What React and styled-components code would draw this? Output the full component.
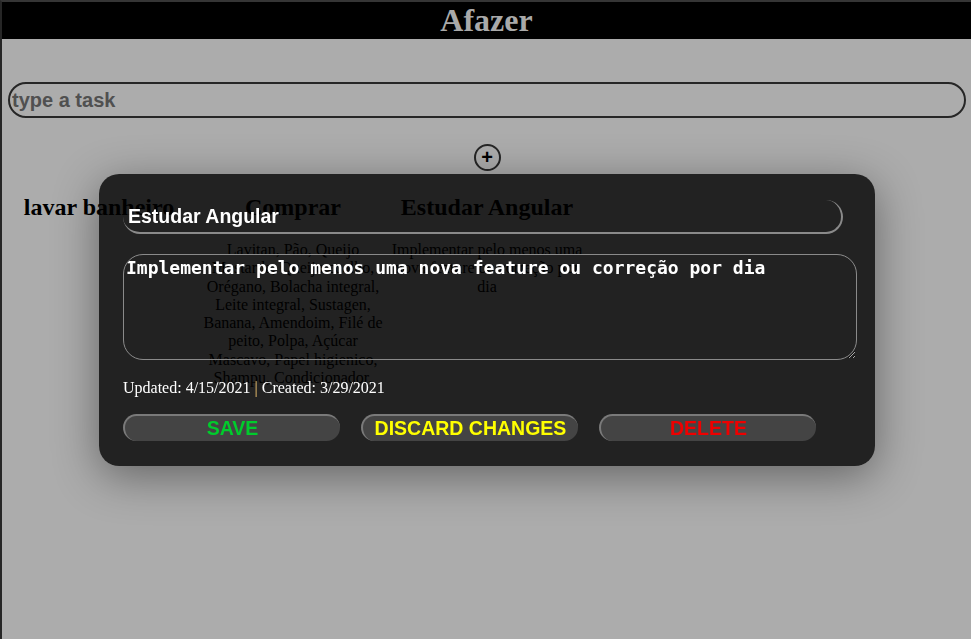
import React, { useState } from 'react'
import styled, { createGlobalStyle } from 'styled-components'

const GlobalStyle = createGlobalStyle`
  html, body {
    margin: 0;
    padding: 0;
    background: #acacac;
  }
  * {
    box-sizing: border-box;
  }
`

const tasks = [
  { id: 1, title: 'lavar banheiro', description: '' },
  {
    id: 2,
    title: 'Comprar',
    description:
      'Lavitan, Pão, Queijo Mostarda, Queijo coalho, Orégano, Bolacha integral, Leite integral, Sustagen, Banana, Amendoim, Filé de peito, Polpa, Açúcar Mascavo, Papel higienico, Shampu, Condicionador,'
  },
  {
    id: 3,
    title: 'Estudar Angular',
    description: 'Implementar pelo menos uma nova feature ou correção por dia'
  }
]

const App = () => {
  const [selected] = useState(tasks[2])
  const [title, setTitle] = useState(selected.title)
  const [text, setText] = useState(selected.description)

  return (
    <>
      <GlobalStyle />
      <Page>
        <Header>
          <h1>Afazer</h1>
        </Header>

        <NewTask>
          <input type="text" placeholder="type a task" />
          <AddButton>+</AddButton>
        </NewTask>

        <CardList>
          {tasks.map((task) => (
            <Card key={task.id}>
              <h2>{task.title}</h2>
              {task.description && <p>{task.description}</p>}
            </Card>
          ))}
        </CardList>

        <Modal>
          <TitleInput value={title} onChange={(e) => setTitle(e.target.value)} />
          <TextArea
            value={text}
            spellCheck={false}
            onChange={(e) => setText(e.target.value)}
          />
          <Dates>
            Updated: 4/15/2021 <span>|</span> Created: 3/29/2021
          </Dates>
          <Actions>
            <ActionButton color="#00cc2c">SAVE</ActionButton>
            <ActionButton color="#ffff00">DISCARD CHANGES</ActionButton>
            <ActionButton color="#ee0000">DELETE</ActionButton>
          </Actions>
        </Modal>
      </Page>
    </>
  )
}

const Page = styled.div`
  min-height: 100vh;
  border-top: 2px solid #353535;
  border-left: 2px solid #262626;
  background: #acacac;
  font-family: "Liberation Serif", "Times New Roman", serif;
`

const Header = styled.header`
  background: #000;
  text-align: center;

  h1 {
    margin: 0;
    font-size: 32px;
    font-weight: bold;
    color: #a9a9a9;
    line-height: 37px;
  }
`

const NewTask = styled.div`
  display: flex;
  flex-direction: column;
  align-items: center;
  padding: 43px 5px 0 6px;

  input {
    width: 100%;
    height: 36px;
    border: 2px solid #262626;
    border-radius: 18px;
    background: transparent;
    padding: 0 2px;
    font-family: "Liberation Sans", Arial, sans-serif;
    font-weight: bold;
    font-size: 20px;
    color: #222;
    outline: none;

    &::placeholder {
      color: #505050;
    }
  }
`

const AddButton = styled.button`
  margin-top: 26px;
  width: 27px;
  height: 27px;
  border-radius: 50%;
  border: 2px solid #262626;
  background: transparent;
  padding: 0 0 1px;
  font-family: "Liberation Sans", Arial, sans-serif;
  font-size: 20px;
  font-weight: bold;
  line-height: 20px;
  color: #000;
  display: flex;
  align-items: center;
  justify-content: center;
`

const CardList = styled.div`
  display: flex;
  align-items: flex-start;
`

const Card = styled.div`
  width: 194px;
  text-align: center;
  color: #000;

  h2 {
    font-size: 24px;
    margin: 23px 0 20px;
  }

  p {
    margin: 0;
    font-size: 16px;
    line-height: 18.3px;
  }
`

const Modal = styled.div`
  position: fixed;
  top: 174px;
  left: 99px;
  width: 776px;
  height: 292px;
  border-radius: 20px;
  background: rgba(0, 0, 0, 0.8);
  box-shadow: 0 10px 45px rgba(0, 0, 0, 0.42);
  padding: 26px 18px 0 24px;
  display: flex;
  flex-direction: column;
`

const TitleInput = styled.input`
  width: 720px;
  height: 34px;
  background: transparent;
  border: none;
  border-bottom: 2px solid #8a8a8a;
  border-right: 2px solid #8a8a8a;
  border-radius: 20px;
  padding: 0 5px;
  font-family: "Liberation Sans", Arial, sans-serif;
  font-weight: bold;
  font-size: 19.5px;
  color: #fff;
  outline: none;
`

const TextArea = styled.textarea`
  margin-top: 20px;
  width: 734px;
  height: 106px;
  background: transparent;
  border: 1px solid #8a8a8a;
  border-radius: 20px;
  padding: 2px;
  font-family: "DejaVu Sans Mono", monospace;
  font-weight: bold;
  font-size: 18px;
  line-height: 22px;
  color: #fff;
  outline: none;
`

const Dates = styled.div`
  margin-top: 19px;
  font-size: 16px;
  line-height: 18px;
  color: #fff;

  span {
    color: #f5c870;
  }
`

const Actions = styled.div`
  display: flex;
  gap: 21px;
  margin-top: 17px;
`

const ActionButton = styled.button`
  width: 217px;
  height: 27px;
  background: #444;
  border: none;
  border-top: 2px solid #7a7a7a;
  border-left: 2px solid #7a7a7a;
  border-radius: 14px;
  padding: 0;
  font-family: "Liberation Sans", Arial, sans-serif;
  font-weight: bold;
  font-size: 19.5px;
  line-height: 23px;
  color: ${(props) => props.color};
`

export default App
